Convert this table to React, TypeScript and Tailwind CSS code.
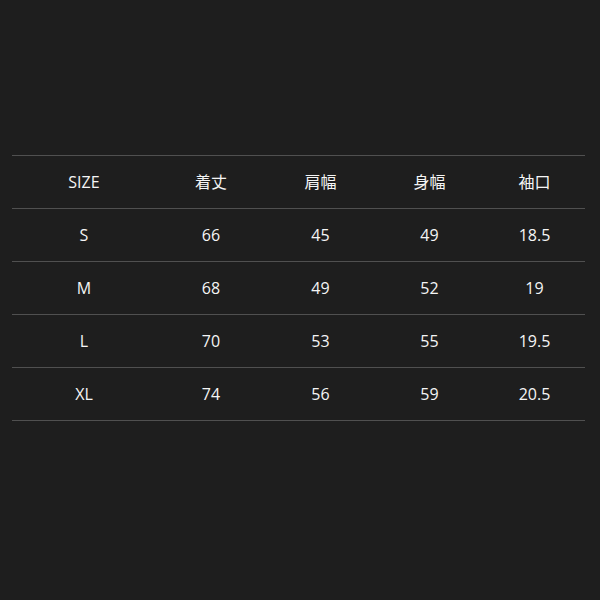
const headers = ["SIZE", "着丈", "肩幅", "身幅", "袖口"]

const rows = [
  ["S", "66", "45", "49", "18.5"],
  ["M", "68", "49", "52", "19"],
  ["L", "70", "53", "55", "19.5"],
  ["XL", "74", "56", "59", "20.5"],
]

function Row({ cells }: { cells: string[] }) {
  return (
    <div className="grid grid-cols-[144px_110px_109px_109px_101px] h-[53px] items-center border-b border-[#505050]">
      {cells.map((c, i) => (
        <div key={i} className="text-center">
          {c}
        </div>
      ))}
    </div>
  )
}

export default function App() {
  return (
    <div
      className="w-[600px] h-[600px] bg-[#1e1e1e] pt-[155px] text-[#f5f5f5] text-[16px]"
      style={{ fontFamily: '"Open Sans", "Noto Sans CJK JP", sans-serif' }}
    >
      <div className="ml-[12px] w-[573px] border-t border-[#505050]">
        <Row cells={headers} />
        {rows.map((r, i) => (
          <Row key={i} cells={r} />
        ))}
      </div>
    </div>
  )
}
